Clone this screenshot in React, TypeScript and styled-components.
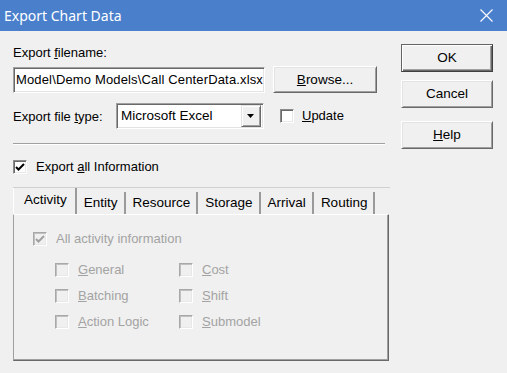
import React from 'react';
import styled, { createGlobalStyle } from 'styled-components';

const Global = createGlobalStyle`
  html, body { margin: 0; padding: 0; background: #f0f0f0; }
  body { font-family: "Liberation Sans", Arial, sans-serif; font-size: 13px; color: #000; }
  * { box-sizing: border-box; }
`;

const Window = styled.div`
  width: 507px;
  height: 373px;
  background: #f0f0f0;
  display: flex;
  flex-direction: column;
  overflow: hidden;
`;

const TitleBar = styled.div`
  height: 31px;
  flex: none;
  background: #4a7fcc;
  color: #fff;
  display: flex;
  align-items: center;
  justify-content: space-between;
  padding: 0 14px 0 4px;
  font-family: "Noto Sans", "Open Sans", sans-serif;
  font-size: 14px;
`;

const TitleText = styled.span`
  line-height: 20px;
`;

const Body = styled.div`
  flex: 1;
  display: flex;
  padding-left: 13px;
`;

const LeftCol = styled.div`
  width: 377px;
  display: flex;
  flex-direction: column;
`;

const RightCol = styled.div`
  margin-left: 11px;
  width: 92px;
  display: flex;
  flex-direction: column;
  padding-top: 13px;
`;

const Label = styled.div<{ $mt?: number; $w?: number }>`
  line-height: 15px;
  margin-top: ${p => p.$mt ?? 0}px;
  width: ${p => (p.$w ? `${p.$w}px` : 'auto')};
  flex: none;
  white-space: nowrap;
`;

const Row = styled.div<{ $mt: number; $gap?: number }>`
  display: flex;
  align-items: center;
  margin-top: ${p => p.$mt}px;
  gap: ${p => p.$gap ?? 0}px;
`;

const Sunken = styled.div<{ $w: number }>`
  width: ${p => p.$w}px;
  height: 26px;
  flex: none;
  background: #fff;
  border-top: 1px solid #a0a0a0;
  border-left: 1px solid #a0a0a0;
  border-right: 1px solid #fff;
  border-bottom: 1px solid #fff;
  box-shadow: inset 1px 1px 0 #696969, inset -1px -1px 0 #e3e3e3;
  display: flex;
  align-items: center;
  white-space: nowrap;
  overflow: hidden;
`;

const InputText = styled.span`
  padding-left: 2px;
  line-height: 16px;
  font-size: 13px;
  letter-spacing: 0.15px;
`;

const SelectText = styled.span`
  flex: 1;
  padding-left: 4px;
  line-height: 16px;
  font-size: 13.5px;
`;

const ArrowButton = styled.div`
  width: 20px;
  height: 22px;
  margin-right: 2px;
  background: #f0f0f0;
  border-top: 1px solid #e3e3e3;
  border-left: 1px solid #e3e3e3;
  border-right: 1px solid #696969;
  border-bottom: 1px solid #696969;
  box-shadow: inset 1px 1px 0 #fff, inset -1px -1px 0 #a0a0a0;
  display: flex;
  align-items: center;
  justify-content: center;
`;

const Button = styled.div<{ $w: number; $h?: number; $default?: boolean; $mt?: number }>`
  width: ${p => p.$w}px;
  height: ${p => p.$h ?? 28}px;
  margin-top: ${p => p.$mt ?? 0}px;
  background: #f0f0f0;
  border-top: 1px solid ${p => (p.$default ? '#646464' : '#fff')};
  border-left: 1px solid ${p => (p.$default ? '#646464' : '#fff')};
  border-right: 1px solid ${p => (p.$default ? '#404040' : '#696969')};
  border-bottom: 1px solid ${p => (p.$default ? '#404040' : '#696969')};
  box-shadow: ${p =>
    p.$default
      ? 'inset 1px 1px 0 #fff, inset -1px -1px 0 #696969, inset -2px -2px 0 #a0a0a0'
      : 'inset 1px 1px 0 #e3e3e3, inset -1px -1px 0 #a0a0a0'};
  display: flex;
  align-items: center;
  justify-content: center;
  font-size: 13.5px;
  line-height: 16px;
  flex: none;
`;

const Box = styled.span<{ $disabled?: boolean }>`
  width: 14px;
  height: 14px;
  flex: none;
  background: ${p => (p.$disabled ? '#f0f0f0' : '#fff')};
  border-top: 1px solid ${p => (p.$disabled ? '#a8a8a8' : '#8a8a8a')};
  border-left: 1px solid ${p => (p.$disabled ? '#a8a8a8' : '#8a8a8a')};
  border-right: 1px solid #fff;
  border-bottom: 1px solid #fff;
  box-shadow: inset 1px 1px 0 ${p => (p.$disabled ? '#c0c0c0' : '#6a6a6a')},
    inset -1px -1px 0 #e8e8e8;
  display: flex;
  align-items: center;
  justify-content: center;
`;

const CheckRow = styled.div<{ $gap: number; $disabled?: boolean; $ml?: number }>`
  display: flex;
  align-items: center;
  gap: ${p => p.$gap}px;
  margin-left: ${p => p.$ml ?? 0}px;
  color: ${p => (p.$disabled ? '#a3a3a3' : '#000')};
  line-height: 16px;
  white-space: nowrap;
`;

const Separator = styled.div`
  margin-top: 14px;
  width: 372px;
  height: 2px;
  border-top: 1px solid #a0a0a0;
  border-bottom: 1px solid #fff;
`;

const CheckLine = styled.div`
  margin-top: 14px;
`;

const TabStrip = styled.div`
  margin-top: 12px;
  height: 27px;
  width: 377px;
  border-top: 1px solid #d0d0d0;
  display: flex;
  align-items: flex-end;
`;

const Tab = styled.div<{ $active?: boolean }>`
  height: ${p => (p.$active ? 26 : 22)}px;
  padding: ${p => (p.$active ? '0 8px 2px 10px' : '0 6px 0 7px')};
  border-left: ${p => (p.$active ? '1px solid #fff' : 'none')};
  border-right: 2px solid #9a9a9a;
  display: flex;
  align-items: center;
  font-size: 13.5px;
  line-height: 16px;
  white-space: nowrap;
`;

const Panel = styled.div`
  width: 376px;
  height: 147px;
  border-left: 1px solid #a0a0a0;
  border-top: 1px solid #fff;
  border-right: 1px solid #696969;
  border-bottom: 1px solid #696969;
  box-shadow: inset -1px -1px 0 #a0a0a0;
  padding: 16px 0 0 19px;
  display: flex;
  flex-direction: column;
`;

const SubGrid = styled.div`
  margin-top: 10px;
  margin-left: 22px;
  display: grid;
  grid-template-columns: 124px auto;
  grid-auto-rows: 26px;
  align-items: center;
`;

const Check = ({ color }: { color: string }) => (
  <svg width="10" height="9" viewBox="0 0 10 9">
    <path d="M1 4 L3.5 6.5 L9 1" stroke={color} strokeWidth="2" fill="none" />
  </svg>
);

const DownArrow = () => (
  <svg width="8" height="5" viewBox="0 0 8 5">
    <path d="M0 0 H7 L3.5 4 Z" fill="#000" />
  </svg>
);

const CloseIcon = () => (
  <svg width="13" height="13" viewBox="0 0 13 13">
    <path d="M0.5 0.5 L12.5 12.5 M12.5 0.5 L0.5 12.5" stroke="#fff" strokeWidth="1.1" />
  </svg>
);

const Option = ({ u, rest }: { u: string; rest: string }) => (
  <CheckRow $gap={9} $disabled>
    <Box $disabled />
    <span>
      <u>{u}</u>
      {rest}
    </span>
  </CheckRow>
);

export default function App() {
  return (
    <Window>
      <Global />
      <TitleBar>
        <TitleText>Export Chart Data</TitleText>
        <CloseIcon />
      </TitleBar>
      <Body>
        <LeftCol>
          <Label $mt={14}>
            Export <u>f</u>ilename:
          </Label>
          <Row $mt={6} $gap={8}>
            <Sunken $w={252}>
              <InputText>Model\Demo Models\Call CenterData.xlsx</InputText>
            </Sunken>
            <Button $w={104} $h={27}>
              <span>
                <u>B</u>rowse...
              </span>
            </Button>
          </Row>
          <Row $mt={10}>
            <Label $w={103}>
              Export file <u>t</u>ype:
            </Label>
            <Sunken $w={148}>
              <SelectText>Microsoft Excel</SelectText>
              <ArrowButton>
                <DownArrow />
              </ArrowButton>
            </Sunken>
            <CheckRow $gap={8} $ml={16}>
              <Box />
              <span>
                <u>U</u>pdate
              </span>
            </CheckRow>
          </Row>
          <Separator />
          <CheckLine>
            <CheckRow $gap={9}>
              <Box>
                <Check color="#000" />
              </Box>
              <span>
                Export <u>a</u>ll Information
              </span>
            </CheckRow>
          </CheckLine>
          <TabStrip>
            <Tab $active>Activity</Tab>
            <Tab>Entity</Tab>
            <Tab>Resource</Tab>
            <Tab>Storage</Tab>
            <Tab>Arrival</Tab>
            <Tab>Routing</Tab>
          </TabStrip>
          <Panel>
            <CheckRow $gap={9} $disabled>
              <Box $disabled>
                <Check color="#a0a0a0" />
              </Box>
              <span>All activity information</span>
            </CheckRow>
            <SubGrid>
              <Option u="G" rest="eneral" />
              <Option u="C" rest="ost" />
              <Option u="B" rest="atching" />
              <Option u="S" rest="hift" />
              <Option u="A" rest="ction Logic" />
              <Option u="S" rest="ubmodel" />
            </SubGrid>
          </Panel>
        </LeftCol>
        <RightCol>
          <Button $w={92} $default>
            OK
          </Button>
          <Button $w={92} $mt={8}>
            Cancel
          </Button>
          <Button $w={92} $mt={13}>
            <span>
              <u>H</u>elp
            </span>
          </Button>
        </RightCol>
      </Body>
    </Window>
  );
}
